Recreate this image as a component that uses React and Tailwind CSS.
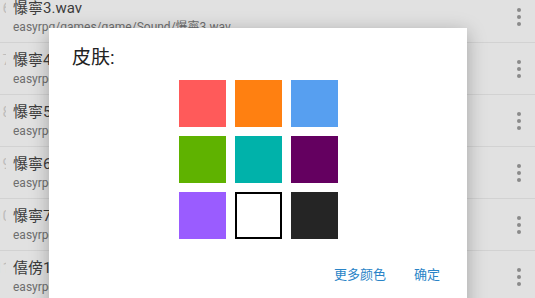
const rows = [
    { n: "6", title: "懪寧3.wav", path: "easyrpg/games/game/Sound/懪寧3.wav" },
    { n: "7", title: "懪寧4.wav", path: "easyrpg/games/game/Sound/懪寧4.wav" },
    { n: "8", title: "懪寧5.wav", path: "easyrpg/games/game/Sound/懪寧5.wav" },
    { n: "9", title: "懪寧6.wav", path: "easyrpg/games/game/Sound/懪寧6.wav" },
    { n: "10", title: "懪寧7.wav", path: "easyrpg/games/game/Sound/懪寧7.wav" },
    { n: "11", title: "僖傍1.wav", path: "easyrpg/games/game/Sound/僖傍1.wav" },
];

const swatches = [
    "bg-[#ff5a5a]",
    "bg-[#ff8011]",
    "bg-[#579ff0]",
    "bg-[#5fb200]",
    "bg-[#00b2aa]",
    "bg-[#640060]",
    "bg-[#9a5cff]",
    "bg-white border-2 border-black",
    "bg-[#252525]",
];

const Dots = () => (
    <div className="flex flex-col gap-[3px] items-center">
        <span className="w-[4px] h-[4px] rounded-full bg-[#8a8a8a]" />
        <span className="w-[4px] h-[4px] rounded-full bg-[#8a8a8a]" />
        <span className="w-[4px] h-[4px] rounded-full bg-[#8a8a8a]" />
    </div>
);

const Row = ({ row }) => (
    <div className="h-[52px] flex items-stretch border-b border-[#d2d2d2]">
        <div className="w-[6px] overflow-hidden flex justify-end pt-[7px]">
            <span className="text-[15px] leading-[20px] text-[#bdbdbd] translate-x-[5px]">{row.n}</span>
        </div>
        <div className="flex-1 pl-[7px] pt-[7px] min-w-0">
            <div className="text-[15px] leading-[20px] text-[#3c3c3c] whitespace-nowrap">{row.title}</div>
            <div className="text-[12px] leading-[18px] text-[#6e6e6e] whitespace-nowrap">{row.path}</div>
        </div>
        <div className="w-[32px] flex items-center justify-center">
            <Dots />
        </div>
    </div>
);

export default function App() {
    return (
        <div
            className="relative w-[535px] h-[298px] overflow-hidden bg-[#e1e1e1]"
            style={{ fontFamily: "Roboto, 'Noto Sans CJK SC', sans-serif" }}
        >
            <div className="-mt-[9px]">
                {rows.map((row) => (
                    <Row key={row.n} row={row} />
                ))}
            </div>

            <div className="absolute left-[49px] top-[28px] w-[418px] h-[300px] bg-white shadow-[0_4px_18px_rgba(0,0,0,0.28)]">
                <div className="pl-[23px] pt-[18px] text-[19px] leading-[24px] text-[#222]">皮肤:</div>
                <div className="mt-[10px] flex justify-center">
                    <div className="grid grid-cols-3 gap-[9px]">
                        {swatches.map((c, i) => (
                            <div key={i} className={`w-[47px] h-[47px] ${c}`} />
                        ))}
                    </div>
                </div>
                <div className="mt-[27px] flex justify-end gap-[28px] pr-[27px] text-[13px] leading-[18px] text-[#2a84c7]">
                    <span>更多颜色</span>
                    <span>确定</span>
                </div>
            </div>
        </div>
    );
}
